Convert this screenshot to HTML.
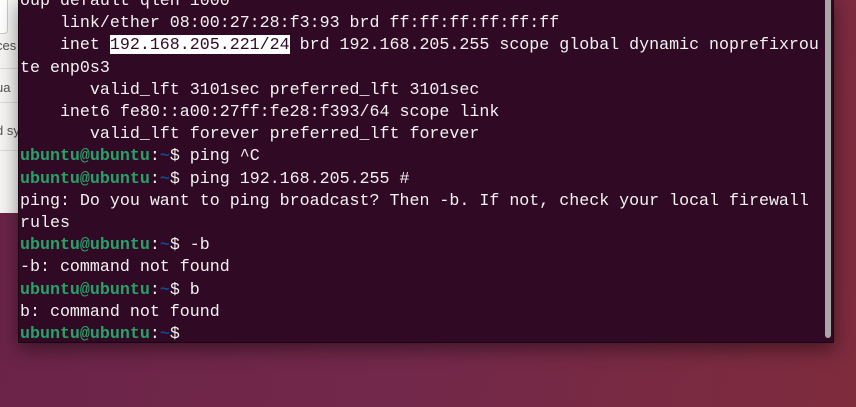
<!DOCTYPE html>
<html><head><meta charset="utf-8"><style>
html,body{margin:0;padding:0;width:856px;height:407px;overflow:hidden;}
body{background:linear-gradient(100deg,#6a2348 0%,#72284a 50%,#7e2b3c 100%);position:relative;font-family:"Liberation Mono",monospace;}
.side{position:absolute;left:0;top:0;width:18px;height:213px;background:#f6f5f4;overflow:hidden;font-family:"Liberation Sans",sans-serif;font-size:13px;color:#555;}
.side div{position:absolute;left:-4px;white-space:nowrap}
.side .box{position:absolute;left:-10px;top:-4px;width:16px;height:36px;border:1px solid #ccc;border-radius:4px;background:#fff}
.side .ln{position:absolute;left:0;width:18px;height:1px;background:#ddd}
.term{position:absolute;left:18px;top:-2px;width:814px;height:343px;background:#300a24;border:1px solid #1a0514;box-shadow:0 6px 18px rgba(0,0,0,.45);}
.txt{position:absolute;left:1px;top:-9px;font-size:16.65px;line-height:22.2px;color:#f2f2f2;white-space:pre;}
.g{color:#26a269;font-weight:bold}.b{color:#12488b;font-weight:bold}
.hl{background:#fff;color:#300a24}
.sb{position:absolute;left:806px;top:0;width:6px;height:339px;background:#a8a8a8;border-radius:0 0 3px 3px}
</style></head><body>
<div class="side"><div class="box"></div><div style="top:38px">ces</div><div class="ln" style="top:68px"></div><div style="top:80px">ua</div><div class="ln" style="top:102px"></div><div style="top:123px">d sy</div><div class="ln" style="top:150px"></div></div>
<div class="term"><div class="txt">oup default qlen 1000
    link/ether 08:00:27:28:f3:93 brd ff:ff:ff:ff:ff:ff
    inet <span class="hl">192.168.205.221/24</span> brd 192.168.205.255 scope global dynamic noprefixrou
te enp0s3
       valid_lft 3101sec preferred_lft 3101sec
    inet6 fe80::a00:27ff:fe28:f393/64 scope link
       valid_lft forever preferred_lft forever
<span class="g">ubuntu@ubuntu</span>:<span class="b">~</span>$ ping ^C
<span class="g">ubuntu@ubuntu</span>:<span class="b">~</span>$ ping 192.168.205.255 #
ping: Do you want to ping broadcast? Then -b. If not, check your local firewall
rules
<span class="g">ubuntu@ubuntu</span>:<span class="b">~</span>$ -b
-b: command not found
<span class="g">ubuntu@ubuntu</span>:<span class="b">~</span>$ b
b: command not found
<span class="g">ubuntu@ubuntu</span>:<span class="b">~</span>$ </div><div class="sb"></div></div>
</body></html>
